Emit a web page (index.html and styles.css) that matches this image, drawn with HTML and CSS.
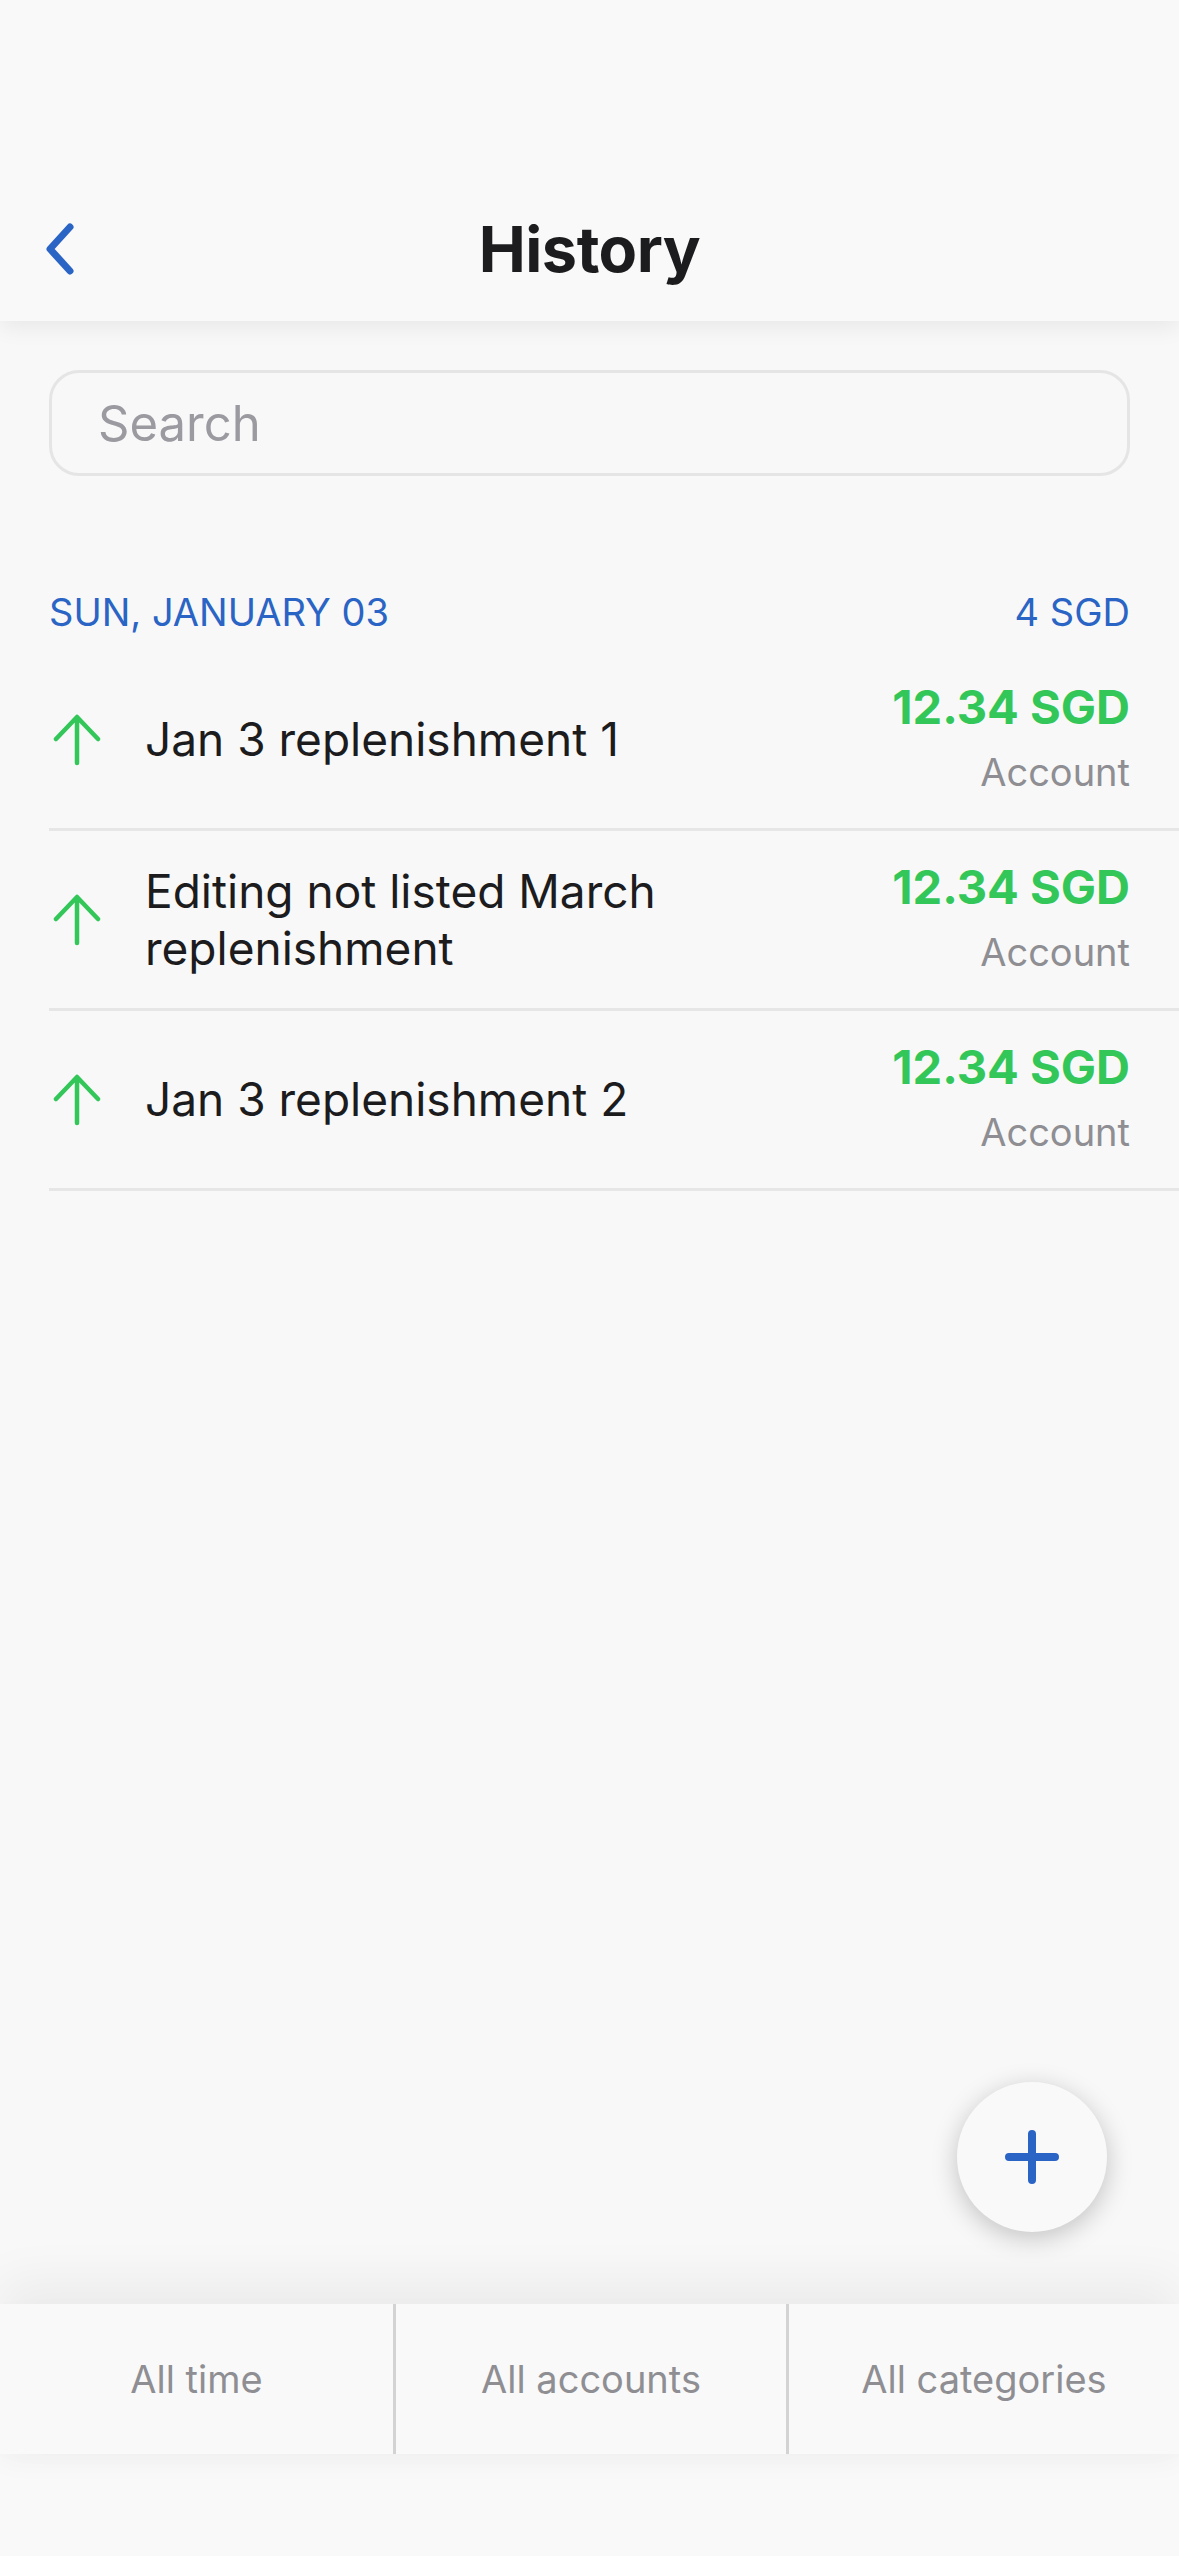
FILE: index.html
```html
<!DOCTYPE html>
<html lang="en">
<head>
<meta charset="utf-8">
<title>History</title>
<link rel="stylesheet" href="styles.css">
</head>
<body>
<div class="screen">
  <header class="topbar">
    <div class="nav">
      <button class="back" aria-label="Back">
        <svg width="40" height="56" viewBox="0 0 40 56"><path d="M28 6 L8 28 L28 50" fill="none" stroke="#2a64c5" stroke-width="7" stroke-linecap="round" stroke-linejoin="round"/></svg>
      </button>
      <h1 class="title">History</h1>
      <span class="spacer"></span>
    </div>
  </header>

  <main class="content">
    <div class="search">Search</div>

    <section class="day">
      <div class="day-head">
        <span>SUN, JANUARY 03</span>
        <span>4 SGD</span>
      </div>
      <ul class="list">
        <li class="row">
          <span class="icon"><svg width="48" height="52" viewBox="0 0 48 52"><path d="M24 49 V4 M3 25 L24 3 L45 25" fill="none" stroke="#33c75a" stroke-width="4.5" stroke-linecap="round" stroke-linejoin="round"/></svg></span>
          <span class="name">Jan 3 replenishment 1</span>
          <span class="right"><span class="amount">12.34 SGD</span><span class="acct">Account</span></span>
        </li>
        <li class="row">
          <span class="icon"><svg width="48" height="52" viewBox="0 0 48 52"><path d="M24 49 V4 M3 25 L24 3 L45 25" fill="none" stroke="#33c75a" stroke-width="4.5" stroke-linecap="round" stroke-linejoin="round"/></svg></span>
          <span class="name">Editing not listed March replenishment</span>
          <span class="right"><span class="amount">12.34 SGD</span><span class="acct">Account</span></span>
        </li>
        <li class="row">
          <span class="icon"><svg width="48" height="52" viewBox="0 0 48 52"><path d="M24 49 V4 M3 25 L24 3 L45 25" fill="none" stroke="#33c75a" stroke-width="4.5" stroke-linecap="round" stroke-linejoin="round"/></svg></span>
          <span class="name">Jan 3 replenishment 2</span>
          <span class="right"><span class="amount">12.34 SGD</span><span class="acct">Account</span></span>
        </li>
      </ul>
    </section>

    <button class="fab" aria-label="Add">
      <svg width="56" height="56" viewBox="0 0 56 56"><path d="M28 5 V51 M5 28 H51" fill="none" stroke="#2a64c5" stroke-width="8" stroke-linecap="round"/></svg>
    </button>
  </main>

  <nav class="filters">
    <div class="filter">All time</div>
    <div class="filter">All accounts</div>
    <div class="filter">All categories</div>
  </nav>
  <div class="home-area"></div>
</div>
</body>
</html>
```

FILE: styles.css
```css
* { box-sizing: border-box; }

html, body {
  margin: 0;
  padding: 0;
  background: #f8f8f8;
}

body {
  font-family: "Inter", "Liberation Sans", sans-serif;
  color: #1c1c1e;
}

.screen {
  width: 1179px;
  height: 2556px;
  display: flex;
  flex-direction: column;
  background: #f8f8f8;
  overflow: hidden;
}

.topbar {
  height: 321px;
  flex: none;
  padding-top: 177px;
  background: #f9f9f9;
  position: relative;
  z-index: 2;
  box-shadow: 0 6px 22px rgba(0, 0, 0, 0.07);
}

.nav {
  height: 144px;
  display: grid;
  grid-template-columns: 1fr auto 1fr;
  align-items: center;
}

.back {
  justify-self: start;
  margin-left: 42px;
  padding: 0;
  border: 0;
  background: none;
  display: flex;
}

.title {
  margin: 0;
  font-size: 63px;
  font-weight: 700;
  color: #1c1c1e;
  letter-spacing: -0.5px;
}

.content {
  flex: 1;
  position: relative;
}

.search {
  margin: 49px 49px 0;
  height: 106px;
  border: 3px solid #e5e5e5;
  border-radius: 30px;
  padding-left: 46px;
  display: flex;
  align-items: center;
  font-size: 49px;
  color: #9a9aa0;
}

.day-head {
  margin: 103px 49px 6px;
  height: 66px;
  display: flex;
  justify-content: space-between;
  align-items: center;
  font-size: 38px;
  color: #2a64c5;
}

.list {
  list-style: none;
  margin: 0 0 0 49px;
  padding: 0;
}

.row {
  height: 180px;
  display: flex;
  align-items: center;
  padding-right: 49px;
  border-bottom: 3px solid #e6e6e6;
}

.icon {
  width: 56px;
  flex: none;
  display: flex;
  justify-content: center;
}

.name {
  flex: 1;
  margin-left: 40px;
  font-size: 46px;
  line-height: 57px;
  color: #1c1c1e;
}

.right {
  flex: none;
  margin-left: 40px;
  display: flex;
  flex-direction: column;
  align-items: flex-end;
  gap: 9px;
}

.amount {
  font-size: 47px;
  line-height: 56px;
  font-weight: 700;
  color: #33c75a;
}

.acct {
  font-size: 38px;
  line-height: 56px;
  color: #8e8e93;
}

.fab {
  position: absolute;
  right: 72px;
  bottom: 72px;
  width: 150px;
  height: 150px;
  border: 0;
  padding: 0;
  border-radius: 50%;
  background: #f9f9f9;
  box-shadow: 0 6px 26px rgba(0, 0, 0, 0.22);
  display: flex;
  align-items: center;
  justify-content: center;
}

.filters {
  height: 150px;
  flex: none;
  display: grid;
  grid-template-columns: repeat(3, 1fr);
  background: #f9f9f9;
  position: relative;
  z-index: 2;
  box-shadow: 0 -24px 50px rgba(0, 0, 0, 0.05), 0 10px 24px rgba(0, 0, 0, 0.03);
}

.filter {
  display: flex;
  align-items: center;
  justify-content: center;
  font-size: 38px;
  color: #8e8e93;
}

.filter + .filter {
  border-left: 3px solid #d3d3d3;
}

.home-area {
  height: 102px;
  flex: none;
  background: #f9f9f9;
}
```
